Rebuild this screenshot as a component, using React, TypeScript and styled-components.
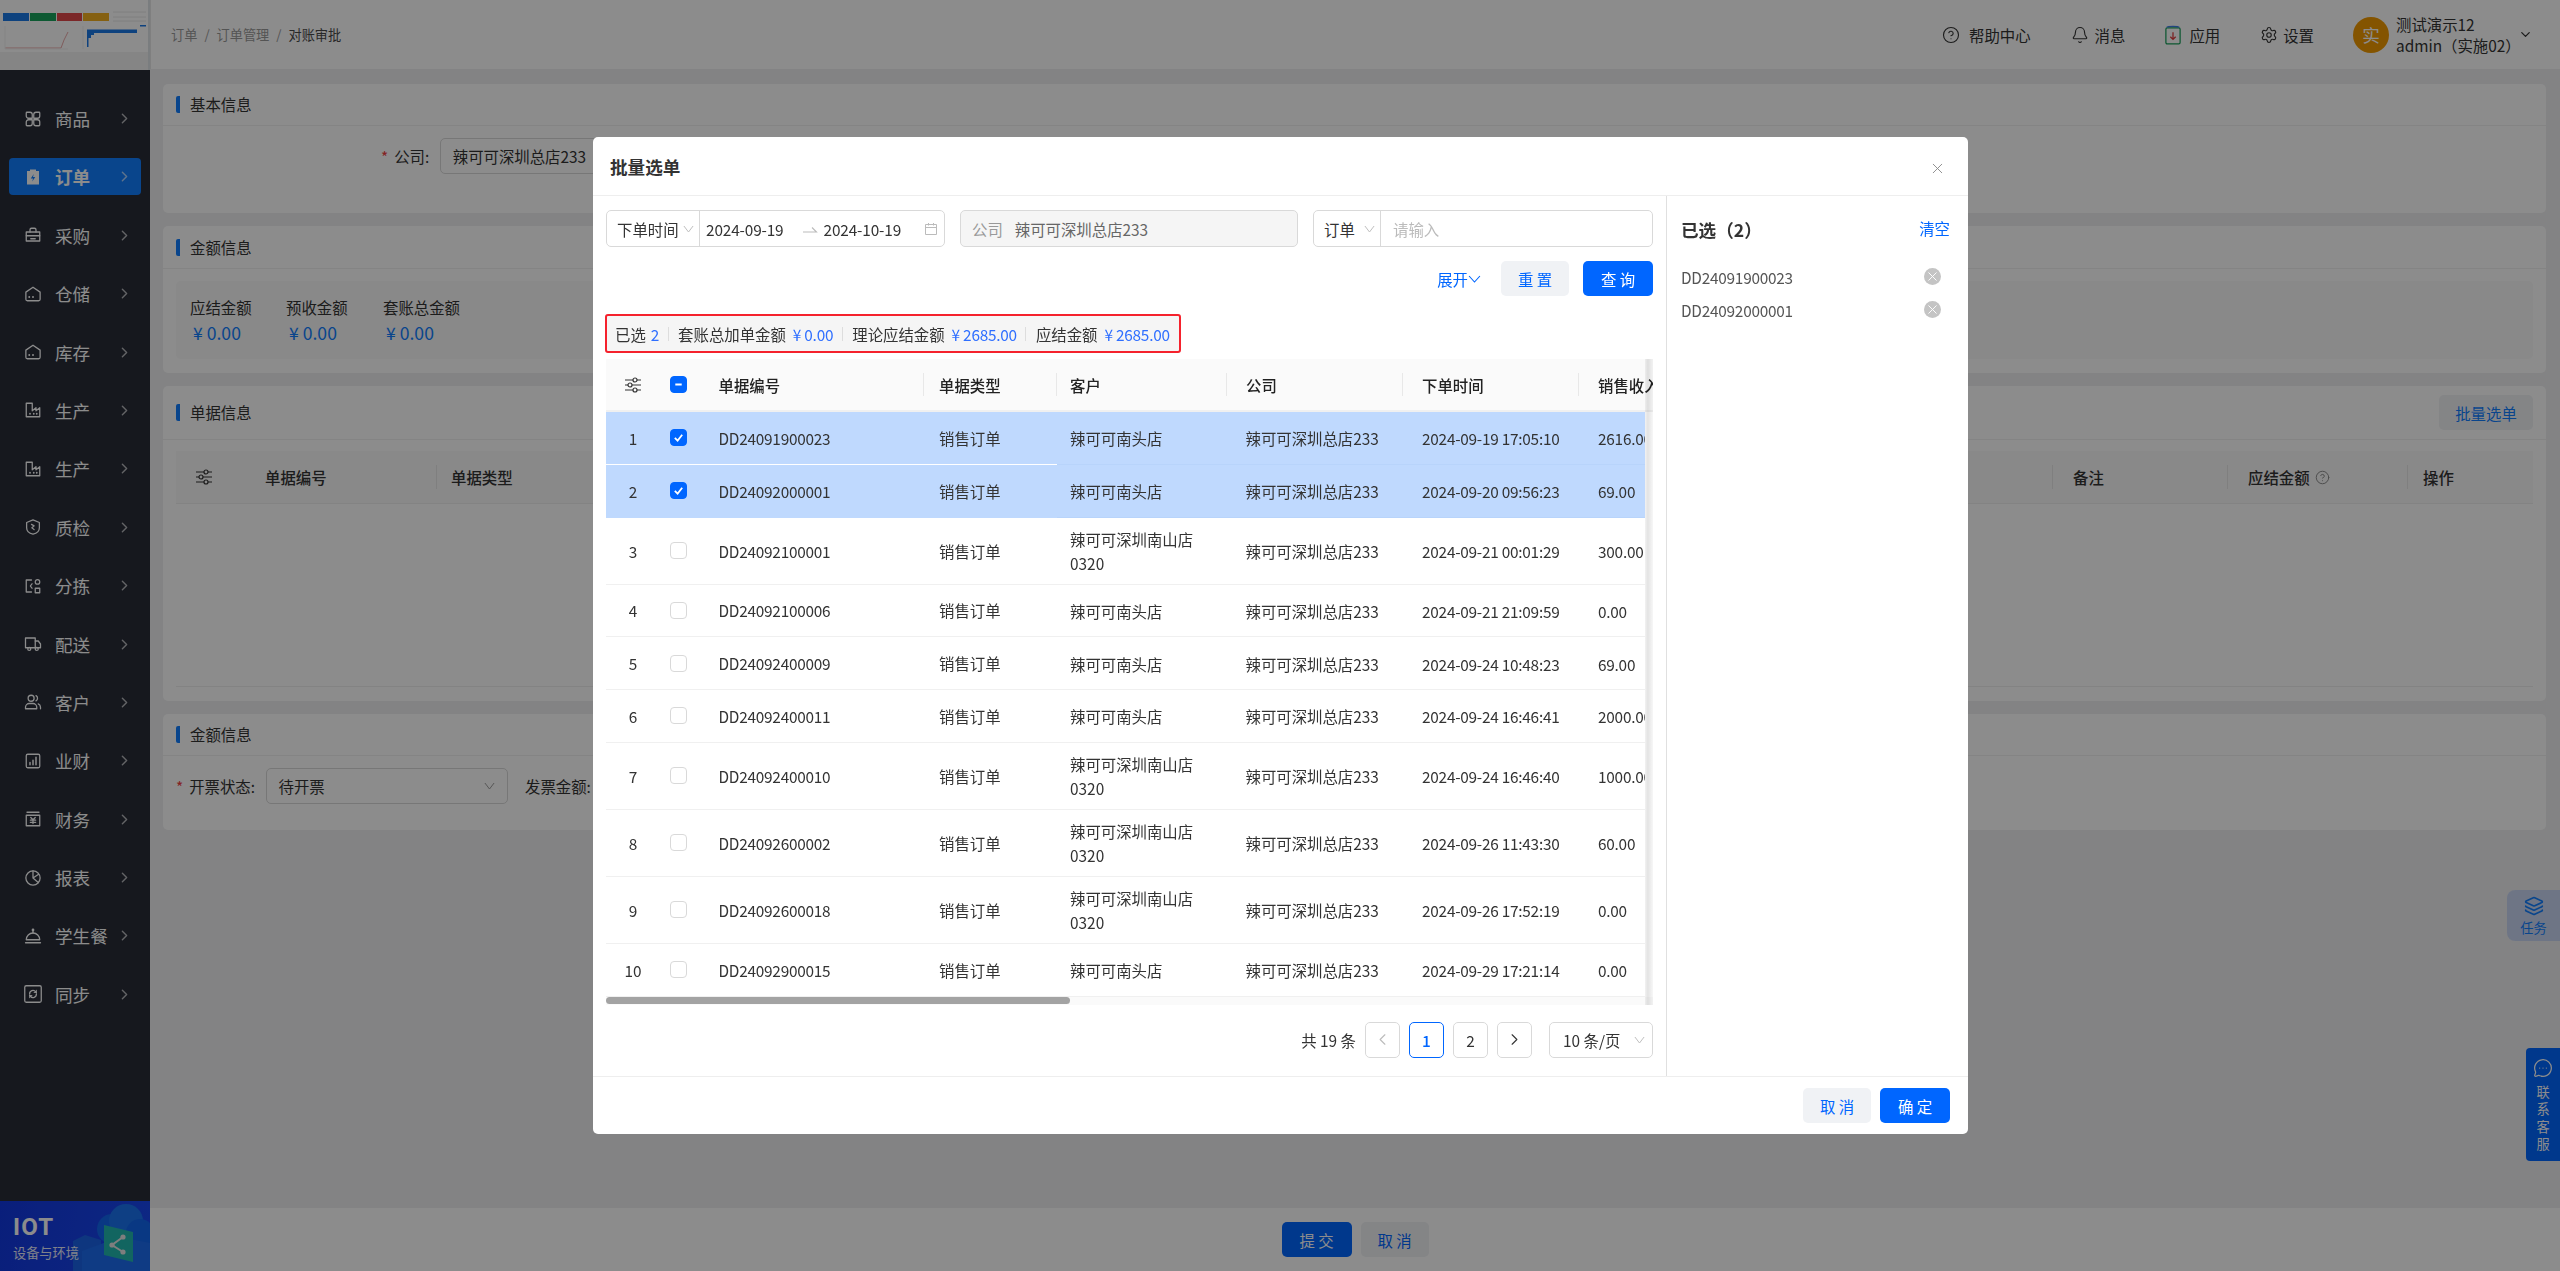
import React from "react";
import styled, { createGlobalStyle } from "styled-components";
import { ChevronDown, ChevronLeft, ChevronRight, CircleHelp, Layers, MessageCircleMore, Settings, Bell, X } from "lucide-react";

const GlobalStyle = createGlobalStyle`
  html, body { margin: 0; padding: 0; height: 100%; overflow: hidden; }
  body {
    font-family: "Noto Sans CJK SC", "Liberation Sans", sans-serif;
    font-size: 15.4px;
    color: #333;
    background: #eeeff1;
  }
  #root { height: 100vh; }
  * { box-sizing: border-box; }
`;

const Page = styled.div`
  display: grid;
  grid-template-columns: 150px 1fr;
  height: 100%;
`;

/* ---------- sidebar ---------- */

const Sidebar = styled.aside`
  display: flex;
  flex-direction: column;
  background: #282c38;
  min-height: 0;
`;

const LogoBox = styled.div`
  height: 70px;
  background: #fff;
  svg { display: block; }
`;

const Nav = styled.nav`
  flex: 1;
  display: flex;
  flex-direction: column;
  gap: 21.4px;
  padding: 30px 9px 0;
`;

const NavItem = styled.div<{ $active?: boolean }>`
  height: 37px;
  display: flex;
  align-items: center;
  padding-left: 15px;
  border-radius: 4px;
  font-size: 17.6px;
  color: #fff;
  font-weight: ${(p) => (p.$active ? 700 : 400)};
  background: ${(p) => (p.$active ? "#127fff" : "transparent")};
`;

const NavLabel = styled.span`
  margin-left: 13px;
  flex: 1;
  white-space: nowrap;
`;

const NavArrow = styled(ChevronRight)`
  width: 17px;
  height: 17px;
  margin-right: 8px;
  opacity: 0.65;
`;

const Banner = styled.div`
  position: relative;
  height: 70px;
  background: linear-gradient(100deg, #1238e0, #1a48f0);
  overflow: hidden;
  color: #fff;
  padding: 12px 0 0 13px;
  svg { position: absolute; left: 0; top: 0; }
`;

const BannerTitle = styled.div`
  position: relative;
  font-family: "Roboto", sans-serif;
  font-size: 24px;
  font-weight: 700;
  line-height: 28px;
  letter-spacing: 1.2px;
`;

const BannerSub = styled.div`
  position: relative;
  font-size: 13.2px;
  line-height: 20px;
  margin-top: 2px;
  opacity: 0.9;
`;

/* ---------- main column ---------- */

const Main = styled.main`
  display: flex;
  flex-direction: column;
  min-width: 0;
`;

const Header = styled.header`
  height: 69px;
  flex: none;
  display: flex;
  align-items: center;
  padding: 0 27px 0 20px;
  background: #fff;
  border-left: 1px solid #e8e8e8;
`;

const Crumbs = styled.div`
  display: flex;
  gap: 7px;
  font-size: 13.2px;
  color: #999;
`;

const Crumb = styled.span<{ $current?: boolean }>`
  color: ${(p) => (p.$current ? "#4a4a4a" : "#999")};
`;

const HeaderActions = styled.div`
  margin-left: auto;
  display: flex;
  align-items: center;
  gap: 40px;
`;

const HeaderLink = styled.div<{ $gap: number }>`
  display: flex;
  align-items: center;
  gap: ${(p) => p.$gap}px;
  white-space: nowrap;
  svg { width: 18px; height: 18px; stroke-width: 1.5; flex: none; }
`;

const UserBox = styled.div`
  display: flex;
  align-items: center;
  gap: 7px;
  margin-left: -1px;
`;

const Avatar = styled.div`
  width: 36px;
  height: 36px;
  border-radius: 50%;
  background: #f19a00;
  color: #fff;
  font-size: 17.6px;
  display: flex;
  align-items: center;
  justify-content: center;
`;

const UserText = styled.div`
  line-height: 21px;
  width: 118px;
  white-space: nowrap;
`;

const UserArrow = styled(ChevronDown)`
  width: 15px;
  height: 15px;
  margin-left: -3px;
`;

const Content = styled.div`
  flex: 1;
  min-height: 0;
  display: flex;
  flex-direction: column;
  gap: 13px;
  padding: 15px 14px 0 13px;
`;

const Card = styled.section<{ $h: number }>`
  height: ${(p) => p.$h}px;
  flex: none;
  background: #fff;
  border-radius: 5px;
  display: flex;
  flex-direction: column;
`;

const CardHead = styled.div<{ $h: number }>`
  height: ${(p) => p.$h}px;
  flex: none;
  display: flex;
  align-items: center;
  padding: 0 13px;
  border-bottom: 1px solid #f0f0f0;
`;

const CardTitle = styled.h3`
  margin: 0;
  font-size: 15.4px;
  font-weight: 400;
  line-height: 17px;
  padding-left: 10px;
  border-left: 4px solid #127fff;
  border-radius: 2px 0 0 2px;
  color: #333;
`;

const FormRow = styled.div<{ $pl: number; $pt: number }>`
  display: flex;
  align-items: center;
  padding: ${(p) => p.$pt}px 0 0 ${(p) => p.$pl}px;
`;

const Required = styled.span`
  color: #f04040;
  margin-right: 6px;
`;

const FormLabel = styled.label`
  margin-right: 10.5px;
  white-space: nowrap;
`;

const FormInput = styled.div<{ $w: number }>`
  width: ${(p) => p.$w}px;
  height: 36px;
  border: 1px solid #d9d9d9;
  border-radius: 5px;
  padding: 0 12px;
  display: flex;
  align-items: center;
  justify-content: space-between;
  white-space: nowrap;
  margin-right: 17.5px;
`;

const AmountBox = styled.div`
  margin: 12px 13px 0;
  height: 78px;
  border-radius: 5px;
  background: #f9f9f9;
  display: flex;
  padding: 14px 0 0 14px;
`;

const Amount = styled.div<{ $w: number }>`
  width: ${(p) => p.$w}px;
  line-height: 24px;
`;

const AmountValue = styled.div`
  font-size: 17.6px;
  line-height: 28px;
  color: #127fff;
  padding-left: 3px;
`;

const BatchButton = styled.button`
  margin-left: auto;
  height: 35px;
  width: 94px;
  border: 0;
  border-radius: 5px;
  background: #f0f2f5;
  color: #127fff;
  font: inherit;
`;

const PlainTable = styled.div`
  margin: 11px 13px 14px;
  flex: 1;
  border-bottom: 1px solid #eee;
`;

const PlainHead = styled.div`
  height: 53px;
  display: grid;
  grid-template-columns: 55px 206px 1fr 175px 180px 125px;
  background: #f9f9f9;
  border-bottom: 1px solid #eee;
  font-weight: 500;
  color: #333;
`;

const HeadCell = styled.div<{ $pl?: number; $divider?: boolean }>`
  position: relative;
  display: flex;
  align-items: center;
  gap: 5px;
  padding-left: ${(p) => p.$pl ?? 0}px;
  white-space: nowrap;
  overflow: hidden;
  ${(p) =>
    p.$divider
      ? `&::after { content: ""; position: absolute; right: 0; top: 14px; bottom: 14px; width: 1px; background: #e8e8e8; }`
      : ""}
`;

const BottomBar = styled.footer`
  height: 63px;
  flex: none;
  background: #fff;
  display: flex;
  align-items: center;
  justify-content: center;
  gap: 9px;
`;

const Btn = styled.button<{ $w: number; $primary?: boolean }>`
  width: ${(p) => p.$w}px;
  height: 35px;
  border: 0;
  border-radius: 5px;
  font: inherit;
  padding: 0;
  background: ${(p) => (p.$primary ? "#0066ff" : "#f0f2f5")};
  color: ${(p) => (p.$primary ? "#fff" : "#0066ff")};
`;

const TaskTab = styled.div`
  position: fixed;
  right: 0;
  top: 890px;
  width: 53px;
  height: 51px;
  border-radius: 8px 0 0 8px;
  background: #c9d6f2;
  color: #127fff;
  display: flex;
  flex-direction: column;
  align-items: center;
  font-size: 13.2px;
  padding-top: 6px;
  line-height: 17px;
  svg { width: 20px; height: 20px; margin-bottom: 3px; }
`;

const ContactTab = styled.div`
  position: fixed;
  right: 0;
  top: 1048px;
  width: 34px;
  height: 113px;
  border-radius: 4px 0 0 4px;
  background: #0066ff;
  color: #fff;
  display: flex;
  flex-direction: column;
  align-items: center;
  font-size: 13.2px;
  line-height: 17.4px;
  padding-top: 10px;
  text-align: center;
  svg { width: 20px; height: 20px; margin-bottom: 5px; stroke-width: 1.5; }
`;

const ContactText = styled.div`
  width: 14px;
  word-break: break-all;
`;

/* ---------- modal ---------- */

const Mask = styled.div`
  position: fixed;
  inset: 0;
  background: rgba(0, 0, 0, 0.45);
`;

const Modal = styled.div`
  position: fixed;
  left: 593px;
  top: 137px;
  width: 1375px;
  height: 997px;
  background: #fff;
  border-radius: 5px;
  display: flex;
  flex-direction: column;
`;

const ModalHead = styled.div`
  height: 59px;
  flex: none;
  display: flex;
  align-items: center;
  justify-content: space-between;
  padding: 0 22px 0 17px;
  border-bottom: 1px solid #eee;
`;

const ModalTitle = styled.h2`
  margin: 0;
  font-size: 17.6px;
  font-weight: 700;
  color: #333;
`;

const CloseIcon = styled(X)`
  width: 17px;
  height: 17px;
  color: #888;
  stroke-width: 1.3;
  margin-top: 4px;
`;

const ModalBody = styled.div`
  flex: 1;
  min-height: 0;
  display: flex;
`;

const LeftPane = styled.div`
  width: 1074px;
  flex: none;
  padding: 14px 13px 0;
  border-right: 1px solid #e0e0e0;
`;

const FilterGrid = styled.div`
  display: grid;
  grid-template-columns: 339px 338px 1fr;
  column-gap: 15px;
`;

const FilterBox = styled.div<{ $disabled?: boolean }>`
  height: 37px;
  display: flex;
  align-items: center;
  border: 1px solid #d9d9d9;
  border-radius: 5px;
  white-space: nowrap;
  background: ${(p) => (p.$disabled ? "#f5f5f5" : "#fff")};
`;

const FilterSelect = styled.div<{ $w: number }>`
  width: ${(p) => p.$w}px;
  height: 100%;
  flex: none;
  display: flex;
  align-items: center;
  justify-content: space-between;
  padding: 0 5px 0 10px;
  border-right: 1px solid #d9d9d9;
`;

const DownMark = styled.svg<{ $w?: number; $color?: string }>`
  width: ${(p) => p.$w ?? 11}px;
  height: 8px;
  flex: none;
  color: ${(p) => p.$color ?? "#bbb"};
`;

const DateText = styled.span<{ $ml: number }>`
  margin-left: ${(p) => p.$ml}px;
  letter-spacing: -0.15px;
`;

const SwapArrow = styled.svg`
  width: 16px;
  height: 10px;
  margin-left: 18px;
  flex: none;
`;

const CalendarIcon = styled.svg`
  width: 14px;
  height: 14px;
  margin-left: auto;
  margin-right: 6px;
  flex: none;
`;

const MutedText = styled.span<{ $ml?: number }>`
  color: #999;
  margin-left: ${(p) => p.$ml ?? 0}px;
`;

const SecondaryText = styled.span`
  color: #666;
  margin-left: 12px;
`;

const Placeholder = styled.span`
  color: #bbb;
  margin-left: 12px;
`;

const ActionRow = styled.div`
  margin-top: 14px;
  display: flex;
  justify-content: flex-end;
  align-items: center;
  gap: 14px;
`;

const ExpandLink = styled.span`
  display: flex;
  align-items: center;
  color: #0066ff;
  margin-right: 6px;
`;

const SummaryBar = styled.div`
  margin: 18px 0 0 -1px;
  width: 576px;
  height: 39px;
  display: flex;
  align-items: center;
  padding-left: 8px;
  border: 2px solid #f5222d;
  border-radius: 3px;
  background: #f5f5f5;
  white-space: nowrap;
`;

const SummaryItem = styled.span<{ $gap: number }>`
  display: flex;
  gap: ${(p) => p.$gap}px;
`;

const SummaryValue = styled.span`
  color: #2f6fff;
  letter-spacing: -0.25px;
  white-space: pre;
`;

const SummaryDivider = styled.span`
  width: 1px;
  height: 14px;
  background: #ddd;
  margin: 0 9.5px 0 8.5px;
`;

const TableWrap = styled.div`
  position: relative;
  margin-top: 6px;
  background: #fff;
`;

const TableShadow = styled.div`
  position: absolute;
  right: 0;
  top: 0;
  bottom: 0;
  width: 8px;
  background: linear-gradient(to right, rgba(0, 0, 0, 0.05), rgba(0, 0, 0, 0.11) 35%, rgba(0, 0, 0, 0.03));
`;

const TableHead = styled.div`
  display: grid;
  grid-template-columns: 54px 37px 227px 132.5px 170px 176.5px 175.5px 1fr;
  height: 53px;
  background: #fafafa;
  border-bottom: 2px solid #f0f0f0;
  font-weight: 500;
  color: #222;
`;

const RowGrid = styled.div<{ $h: number; $selected?: boolean }>`
  width: 1039px;
  height: ${(p) => p.$h}px;
  display: grid;
  grid-template-columns: 54px 37px 227px 132.5px 170px 176.5px 175.5px 1fr;
  background: ${(p) => (p.$selected ? "#bfd9fe" : "#fff")};
  color: #333;
`;

const Cell = styled.div<{ $pl?: number; $pt?: number; $line?: string; $center?: boolean; $num?: boolean }>`
  display: flex;
  align-items: center;
  justify-content: ${(p) => (p.$center ? "center" : "flex-start")};
  padding-left: ${(p) => p.$pl ?? 0}px;
  padding-top: ${(p) => p.$pt ?? 0}px;
  border-bottom: 1px solid ${(p) => p.$line ?? "#f0f0f0"};
  overflow: hidden;
  white-space: nowrap;
  letter-spacing: ${(p) => (p.$num ? "-0.25px" : "0")};
`;

const WrapCell = styled(Cell)`
  white-space: normal;
  line-height: 24.2px;
  padding-right: 14px;
`;

const CheckBox = styled.span<{ $on?: boolean }>`
  width: 17px;
  height: 17px;
  flex: none;
  display: flex;
  align-items: center;
  justify-content: center;
  border-radius: 4px;
  border: 1px solid ${(p) => (p.$on ? "#0066ff" : "#d9d9d9")};
  background: ${(p) => (p.$on ? "#0066ff" : "#fff")};
  svg { display: block; }
`;

const ScrollTrack = styled.div`
  height: 8px;
  background: #fafafa;
`;

const ScrollThumb = styled.div`
  width: 464px;
  height: 7px;
  border-radius: 4px;
  background: #a3a3a3;
`;

const Pager = styled.div`
  margin-top: 17px;
  display: flex;
  justify-content: flex-end;
  align-items: center;
  gap: 9px;
`;

const PageBtn = styled.div<{ $active?: boolean; $dim?: boolean }>`
  width: 35px;
  height: 36px;
  display: flex;
  align-items: center;
  justify-content: center;
  border-radius: 5px;
  border: 1px solid ${(p) => (p.$active ? "#0066ff" : "#d9d9d9")};
  color: ${(p) => (p.$active ? "#0066ff" : p.$dim ? "#bbb" : "#333")};
  font-weight: ${(p) => (p.$active ? 500 : 400)};
  svg { width: 19px; height: 19px; stroke-width: 1.4; }
`;

const PageSize = styled.div`
  width: 104px;
  height: 36px;
  margin-left: 8px;
  display: flex;
  align-items: center;
  justify-content: space-between;
  padding: 0 7px 0 13px;
  border: 1px solid #d9d9d9;
  border-radius: 5px;
  white-space: nowrap;
`;

const RightPane = styled.div`
  flex: 1;
  padding: 0 18px 0 14px;
`;

const PickedHead = styled.div`
  height: 64px;
  display: flex;
  align-items: center;
  justify-content: space-between;
`;

const PickedTitle = styled.span`
  font-size: 17.6px;
  font-weight: 700;
  color: #333;
  padding-top: 2px;
`;

const ClearLink = styled.span`
  color: #0066ff;
`;

const PickedRow = styled.div`
  height: 33px;
  display: flex;
  align-items: center;
  justify-content: space-between;
  padding-right: 9px;
  color: #555;
  letter-spacing: -0.25px;
`;

const PickedClose = styled.span`
  width: 17px;
  height: 17px;
  border-radius: 50%;
  background: #c4c4c4;
  color: #fff;
  display: flex;
  align-items: center;
  justify-content: center;
  svg { width: 15px; height: 15px; stroke-width: 1.5; }
`;

const ModalFoot = styled.div`
  height: 58px;
  flex: none;
  display: flex;
  align-items: center;
  justify-content: flex-end;
  gap: 9px;
  padding-right: 18px;
  border-top: 1px solid #eee;
`;

/* ---------- drawings ---------- */

const NavIcon = ({ name }: { name: string }) => {
  const parts: Record<string, React.ReactNode> = {
    goods: (
      <>
        <path d="M4 3h4a3 3 0 0 1 3 3v5H6a3 3 0 0 1-3-3V4a1 1 0 0 1 1-1z" />
        <path d="M20 3h-4a3 3 0 0 0-3 3v5h5a3 3 0 0 0 3-3V4a1 1 0 0 0-1-1z" />
        <path d="M4 21h4a3 3 0 0 0 3-3v-5H6a3 3 0 0 0-3 3v4a1 1 0 0 0 1 1z" />
        <path d="M20 21h-4a3 3 0 0 1-3-3v-5h5a3 3 0 0 1 3 3v4a1 1 0 0 1-1 1z" />
      </>
    ),
    order: (
      <>
        <path fill="currentColor" stroke="none" d="M4 4h4V2h8v2h4v18H4z" />
        <path fill="#127fff" stroke="none" d="M13 8l-4 6h3l-1 4 4-6h-3z" />
      </>
    ),
    purchase: (
      <>
        <path d="M3 8h18v12H3z" />
        <path d="M8 8V5a2 2 0 0 1 2-2h4a2 2 0 0 1 2 2v3" />
        <path d="M3 13h18M9 17h6" />
      </>
    ),
    store: (
      <>
        <path d="M2.5 9.5 12 3l9.5 6.5V19a2 2 0 0 1-2 2h-15a2 2 0 0 1-2-2z" />
        <path d="M7 16h.01M12 16h.01" strokeWidth="2.6" />
      </>
    ),
    factory: (
      <>
        <path d="M3 3v18h18V9l-5 4V9l-5 4V3z" />
        <path d="M8 17h.01M13 17h.01M17 17h.01" strokeWidth="2.4" />
      </>
    ),
    quality: (
      <>
        <path d="M12 2.5 20.5 6v7c0 4.5-3.5 7.5-8.5 8.5C7 20.5 3.5 17.5 3.5 13V6z" />
        <path d="M10 8.5l3.5 2-3 2.5 3 2.5" />
      </>
    ),
    sort: (
      <>
        <path d="M10 4H3v16h7" />
        <path d="M6 9 3 12l3 3" transform="translate(6 0) scale(.8 1)" />
        <circle cx="18" cy="6.5" r="3" />
        <path d="M15 15h6v6h-6z" />
      </>
    ),
    delivery: (
      <>
        <path d="M2 4h13v13H2z" />
        <path d="M15 8h4l3 4v5h-7" />
        <circle cx="7" cy="18.5" r="2" />
        <circle cx="17" cy="18.5" r="2" />
      </>
    ),
    customer: (
      <>
        <circle cx="9.5" cy="7" r="4" />
        <path d="M2 21v-2a5 5 0 0 1 5-5h5a5 5 0 0 1 5 5v2z" />
        <path d="M16 3.5a4 4 0 0 1 0 7M19 14.5a5 5 0 0 1 3 4.5v2" />
      </>
    ),
    biz: (
      <>
        <rect x="3" y="3" width="18" height="18" rx="2" />
        <path d="M8 17v-3M12 17V11M16 17V7" strokeWidth="2" />
      </>
    ),
    finance: (
      <>
        <path d="M4 3h16" />
        <path d="M3 7h18v14H3z" />
        <path d="M9 10l3 3 3-3M8.5 13.5h7M8.5 16.5h7M12 13v5" />
      </>
    ),
    report: (
      <>
        <circle cx="12" cy="12" r="9.5" />
        <path d="M12 2.5V12l7 6M12 12l7.5-5" />
      </>
    ),
    meal: (
      <>
        <path d="M3 17a9 9 0 0 1 18 0z" />
        <path d="M2 21h20M12 8V5" />
        <circle cx="12" cy="4" r="1" />
      </>
    ),
    sync: (
      <>
        <rect x="1" y="1" width="22" height="22" rx="2" />
        <path d="M7.5 12a4.5 4.5 0 0 1 8-3l1 1M16.5 12a4.5 4.5 0 0 1-8 3l-1-1" />
        <path d="M16.5 7v3h-3M7.5 17v-3h3" strokeWidth="1.2" />
      </>
    ),
  };
  return (
    <svg width="18" height="18" viewBox="0 0 24 24" fill="none" stroke="currentColor" strokeWidth="1.7" strokeLinecap="round" strokeLinejoin="round" style={{ flex: "none" }}>
      {parts[name]}
    </svg>
  );
};

const Thumbnail = () => (
  <svg width="150" height="70" viewBox="0 0 150 70">
    <rect width="150" height="70" fill="#fff" />
    <rect y="52" width="148" height="18" fill="#f2f2f2" />
    <rect x="148" width="2" height="70" fill="#dfe3e8" />
    <rect x="3" y="13" width="26" height="8" fill="#1a78e6" />
    <rect x="30" y="13" width="26" height="8" fill="#18a35c" />
    <rect x="57" y="13" width="25" height="8" fill="#e0484a" />
    <rect x="83" y="13" width="26" height="8" fill="#f2b020" />
    <path d="M113 12h33M113 17h33M113 21h33" stroke="#e8e8e8" />
    <path d="M5 48h56l3-8 4-8" stroke="#e8a8a8" fill="none" />
    <path d="M5 49h63M5 26v23M83 26v23" stroke="#f0f0f0" fill="none" />
    <rect x="87" y="29.5" width="50" height="3.5" fill="#1a78e6" />
    <rect x="87" y="33" width="7" height="2" fill="#1a78e6" />
    <rect x="87" y="35" width="4" height="3" fill="#1a78e6" />
    <rect x="87" y="38" width="1.5" height="9" fill="#1a78e6" />
    <rect x="140" y="25" width="6" height="1.5" fill="#1a78e6" />
  </svg>
);

const BannerArt = () => (
  <svg width="150" height="70" viewBox="0 0 150 70">
    <circle cx="112" cy="28" r="15" fill="#1266ee" />
    <circle cx="126" cy="20" r="17" fill="#1a74f0" />
    <circle cx="140" cy="32" r="14" fill="#1266ee" />
    <path d="M73 40l12-6 16 5v31H73z" fill="#1b63e8" />
    <path d="M82 50l38-14 30 6v28H82z" fill="#1c6cf0" />
    <path d="M104 24l29 7v30l-29-7z" fill="#22b8b0" />
    <path d="M123 36l-11 8 11 7" stroke="#e6e6e6" strokeWidth="2" fill="none" />
    <circle cx="123" cy="36" r="2.6" fill="#e6e6e6" />
    <circle cx="112" cy="44" r="2.6" fill="#e6e6e6" />
    <circle cx="123" cy="51" r="2.6" fill="#e6e6e6" />
  </svg>
);

const SlidersIcon = () => (
  <svg width="18" height="16" viewBox="0 0 18 16" fill="none" stroke="#333" strokeWidth="1.2">
    <path d="M1 3h8M13 3h4M1 8h3M8 8h9M1 13h8M13 13h4" />
    <circle cx="11" cy="3" r="2" />
    <circle cx="6" cy="8" r="2" />
    <circle cx="11" cy="13" r="2" />
  </svg>
);

const AppsIcon = () => (
  <svg viewBox="0 0 18 22" fill="none" style={{ width: 16, height: 20 }}>
    <rect x="1" y="3" width="16" height="18" rx="1.5" stroke="#19a05a" strokeWidth="1.4" />
    <path d="M2 2.5C3 1 15 1 16 2.5" stroke="#3f7fe8" strokeWidth="1.4" />
    <path d="M9 8v8M6 13l3 3 3-3" stroke="#e03a3a" strokeWidth="1.4" />
  </svg>
);

const VMark = ({ w, color }: { w?: number; color?: string }) => (
  <DownMark $w={w} $color={color} viewBox="0 0 12 8" preserveAspectRatio="none" fill="none" stroke="currentColor" strokeWidth="1">
    <path d="M1 1l5 6 5-6" />
  </DownMark>
);

/* ---------- data ---------- */

const navItems = [
  { name: "goods", label: "商品" },
  { name: "order", label: "订单", active: true },
  { name: "purchase", label: "采购" },
  { name: "store", label: "仓储" },
  { name: "store", label: "库存" },
  { name: "factory", label: "生产" },
  { name: "factory", label: "生产" },
  { name: "quality", label: "质检" },
  { name: "sort", label: "分拣" },
  { name: "delivery", label: "配送" },
  { name: "customer", label: "客户" },
  { name: "biz", label: "业财" },
  { name: "finance", label: "财务" },
  { name: "report", label: "报表" },
  { name: "meal", label: "学生餐" },
  { name: "sync", label: "同步" },
];

const NANTOU = "辣可可南头店";
const NANSHAN = "辣可可深圳南山店0320";
const orders = [
  { no: "DD24091900023", shop: NANTOU, time: "2024-09-19 17:05:10", money: "2616.00", on: true },
  { no: "DD24092000001", shop: NANTOU, time: "2024-09-20 09:56:23", money: "69.00", on: true },
  { no: "DD24092100001", shop: NANSHAN, time: "2024-09-21 00:01:29", money: "300.00" },
  { no: "DD24092100006", shop: NANTOU, time: "2024-09-21 21:09:59", money: "0.00" },
  { no: "DD24092400009", shop: NANTOU, time: "2024-09-24 10:48:23", money: "69.00" },
  { no: "DD24092400011", shop: NANTOU, time: "2024-09-24 16:46:41", money: "2000.00" },
  { no: "DD24092400010", shop: NANSHAN, time: "2024-09-24 16:46:40", money: "1000.00" },
  { no: "DD24092600002", shop: NANSHAN, time: "2024-09-26 11:43:30", money: "60.00" },
  { no: "DD24092600018", shop: NANSHAN, time: "2024-09-26 17:52:19", money: "0.00" },
  { no: "DD24092900015", shop: NANTOU, time: "2024-09-29 17:21:14", money: "0.00" },
];

const CheckMark = () => (
  <svg width="11" height="11" viewBox="0 0 12 12" fill="none" stroke="#fff" strokeWidth="2">
    <path d="M2 6.5 5 9.5 10 3" />
  </svg>
);

const MinusMark = () => (
  <svg width="11" height="11" viewBox="0 0 12 12" fill="none" stroke="#fff" strokeWidth="2.2">
    <path d="M2.5 6h7" />
  </svg>
);

export default function App() {
  return (
    <>
      <GlobalStyle />
      <Page>
        <Sidebar>
          <LogoBox>
            <Thumbnail />
          </LogoBox>
          <Nav>
            {navItems.map((item, i) => (
              <NavItem key={i} $active={item.active}>
                <NavIcon name={item.name} />
                <NavLabel>{item.label}</NavLabel>
                <NavArrow />
              </NavItem>
            ))}
          </Nav>
          <Banner>
            <BannerArt />
            <BannerTitle>IOT</BannerTitle>
            <BannerSub>设备与环境</BannerSub>
          </Banner>
        </Sidebar>

        <Main>
          <Header>
            <Crumbs>
              <Crumb>订单</Crumb>
              <Crumb>/</Crumb>
              <Crumb>订单管理</Crumb>
              <Crumb>/</Crumb>
              <Crumb $current>对账审批</Crumb>
            </Crumbs>
            <HeaderActions>
              <HeaderLink $gap={9}>
                <CircleHelp />
                帮助中心
              </HeaderLink>
              <HeaderLink $gap={6}>
                <Bell />
                消息
              </HeaderLink>
              <HeaderLink $gap={8}>
                <AppsIcon />
                应用
              </HeaderLink>
              <HeaderLink $gap={5}>
                <Settings />
                设置
              </HeaderLink>
              <UserBox>
                <Avatar>实</Avatar>
                <UserText>
                  测试演示12
                  <br />
                  admin（实施02）
                </UserText>
                <UserArrow />
              </UserBox>
            </HeaderActions>
          </Header>

          <Content>
            <Card $h={129}>
              <CardHead $h={42}>
                <CardTitle>基本信息</CardTitle>
              </CardHead>
              <FormRow $pl={218} $pt={12}>
                <Required>*</Required>
                <FormLabel>公司:</FormLabel>
                <FormInput $w={340}>辣可可深圳总店233</FormInput>
              </FormRow>
            </Card>

            <Card $h={147}>
              <CardHead $h={43}>
                <CardTitle>金额信息</CardTitle>
              </CardHead>
              <AmountBox>
                <Amount $w={96}>
                  应结金额
                  <AmountValue>¥ 0.00</AmountValue>
                </Amount>
                <Amount $w={97}>
                  预收金额
                  <AmountValue>¥ 0.00</AmountValue>
                </Amount>
                <Amount $w={120}>
                  套账总金额
                  <AmountValue>¥ 0.00</AmountValue>
                </Amount>
              </AmountBox>
            </Card>

            <Card $h={315}>
              <CardHead $h={54}>
                <CardTitle>单据信息</CardTitle>
                <BatchButton>批量选单</BatchButton>
              </CardHead>
              <PlainTable>
                <PlainHead>
                  <HeadCell $pl={19}>
                    <SlidersIcon />
                  </HeadCell>
                  <HeadCell $pl={34} $divider>
                    单据编号
                  </HeadCell>
                  <HeadCell $pl={14} $divider>
                    单据类型
                  </HeadCell>
                  <HeadCell $pl={20} $divider>
                    备注
                  </HeadCell>
                  <HeadCell $pl={20} $divider>
                    应结金额
                    <CircleHelp size={15} strokeWidth={1.5} color="#888" />
                  </HeadCell>
                  <HeadCell $pl={15}>操作</HeadCell>
                </PlainHead>
              </PlainTable>
            </Card>

            <Card $h={116}>
              <CardHead $h={42}>
                <CardTitle>金额信息</CardTitle>
              </CardHead>
              <FormRow $pl={13} $pt={12}>
                <Required>*</Required>
                <FormLabel>开票状态:</FormLabel>
                <FormInput $w={242}>
                  待开票
                  <VMark color="#999" />
                </FormInput>
                <FormLabel>发票金额:</FormLabel>
              </FormRow>
            </Card>
          </Content>

          <BottomBar>
            <Btn $w={70} $primary>
              提 交
            </Btn>
            <Btn $w={68}>取 消</Btn>
          </BottomBar>
        </Main>

        <TaskTab>
          <Layers />
          任务
        </TaskTab>
        <ContactTab>
          <MessageCircleMore />
          <ContactText>联系客服</ContactText>
        </ContactTab>
      </Page>

      <Mask />

      <Modal>
        <ModalHead>
          <ModalTitle>批量选单</ModalTitle>
          <CloseIcon />
        </ModalHead>
        <ModalBody>
          <LeftPane>
            <FilterGrid>
              <FilterBox>
                <FilterSelect $w={93}>
                  下单时间
                  <VMark />
                </FilterSelect>
                <DateText $ml={6}>2024-09-19</DateText>
                <SwapArrow viewBox="0 0 16 10" fill="none" stroke="#bbb" strokeWidth="1.1">
                  <path d="M1 8h13.5L10 3.5" />
                </SwapArrow>
                <DateText $ml={6}>2024-10-19</DateText>
                <CalendarIcon viewBox="0 0 14 14" fill="none" stroke="#bbb" strokeWidth="1">
                  <path d="M1.5 2.5h11v10h-11zM1.5 5.5h11M4.5 1v2.5M9.5 1v2.5" />
                </CalendarIcon>
              </FilterBox>
              <FilterBox $disabled>
                <MutedText $ml={11}>公司</MutedText>
                <SecondaryText>辣可可深圳总店233</SecondaryText>
              </FilterBox>
              <FilterBox>
                <FilterSelect $w={67}>
                  订单
                  <VMark />
                </FilterSelect>
                <Placeholder>请输入</Placeholder>
              </FilterBox>
            </FilterGrid>

            <ActionRow>
              <ExpandLink>
                展开
                <VMark w={13} color="#0066ff" />
              </ExpandLink>
              <Btn $w={68}>重 置</Btn>
              <Btn $w={70} $primary>
                查 询
              </Btn>
            </ActionRow>

            <SummaryBar>
              <SummaryItem $gap={5}>
                已选<SummaryValue>2</SummaryValue>
              </SummaryItem>
              <SummaryDivider />
              <SummaryItem $gap={7}>
                套账总加单金额<SummaryValue>¥ 0.00</SummaryValue>
              </SummaryItem>
              <SummaryDivider />
              <SummaryItem $gap={7}>
                理论应结金额<SummaryValue>¥ 2685.00</SummaryValue>
              </SummaryItem>
              <SummaryDivider />
              <SummaryItem $gap={7}>
                应结金额<SummaryValue>¥ 2685.00</SummaryValue>
              </SummaryItem>
            </SummaryBar>

            <TableWrap>
              <TableHead>
                <HeadCell $pl={18}>
                  <SlidersIcon />
                </HeadCell>
                <HeadCell $pl={10}>
                  <CheckBox $on>
                    <MinusMark />
                  </CheckBox>
                </HeadCell>
                <HeadCell $pl={21.5} $divider>
                  单据编号
                </HeadCell>
                <HeadCell $pl={15} $divider>
                  单据类型
                </HeadCell>
                <HeadCell $pl={13.5} $divider>
                  客户
                </HeadCell>
                <HeadCell $pl={19.5} $divider>
                  公司
                </HeadCell>
                <HeadCell $pl={19} $divider>
                  下单时间
                </HeadCell>
                <HeadCell $pl={19.5}>销售收入</HeadCell>
              </TableHead>

              {orders.map((o, i) => {
                const line = i === 0 ? "#fff" : o.on ? "#bfd9fe" : "#f0f0f0";
                const rightLine = o.on ? "#b8d4fb" : "#f0f0f0";
                return (
                  <RowGrid key={o.no} $h={o.shop === NANSHAN ? 67 : 52.75} $selected={o.on}>
                    <Cell $center $line={line}>
                      {i + 1}
                    </Cell>
                    <Cell $pl={10} $line={line}>
                      <CheckBox $on={o.on}>{o.on && <CheckMark />}</CheckBox>
                    </Cell>
                    <Cell $pl={21.5} $line={line} $num>
                      {o.no}
                    </Cell>
                    <Cell $pl={15} $line={line}>
                      销售订单
                    </Cell>
                    <WrapCell $pl={13.5} $pt={1} $line={rightLine}>
                      <span>{o.shop}</span>
                    </WrapCell>
                    <Cell $pl={19} $pt={1} $line={rightLine}>
                      辣可可深圳总店233
                    </Cell>
                    <Cell $pl={19} $pt={1} $line={rightLine} $num>
                      {o.time}
                    </Cell>
                    <Cell $pl={19.5} $pt={1} $line={rightLine} $num>
                      {o.money}
                    </Cell>
                  </RowGrid>
                );
              })}

              <ScrollTrack>
                <ScrollThumb />
              </ScrollTrack>
              <TableShadow />
            </TableWrap>

            <Pager>
              <span>共 19 条</span>
              <PageBtn $dim>
                <ChevronLeft />
              </PageBtn>
              <PageBtn $active>1</PageBtn>
              <PageBtn>2</PageBtn>
              <PageBtn>
                <ChevronRight />
              </PageBtn>
              <PageSize>
                10 条/页
                <VMark />
              </PageSize>
            </Pager>
          </LeftPane>

          <RightPane>
            <PickedHead>
              <PickedTitle>已选（2）</PickedTitle>
              <ClearLink>清空</ClearLink>
            </PickedHead>
            {orders
              .filter((o) => o.on)
              .map((o) => (
                <PickedRow key={o.no}>
                  {o.no}
                  <PickedClose>
                    <X />
                  </PickedClose>
                </PickedRow>
              ))}
          </RightPane>
        </ModalBody>
        <ModalFoot>
          <Btn $w={68}>取 消</Btn>
          <Btn $w={70} $primary>
            确 定
          </Btn>
        </ModalFoot>
      </Modal>
    </>
  );
}
